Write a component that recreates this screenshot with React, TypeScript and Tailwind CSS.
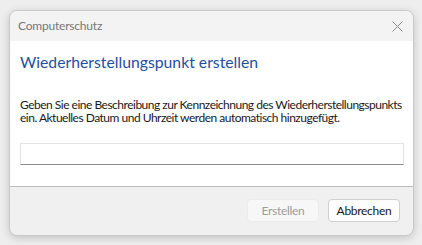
import React from "react";

export default function App() {
  return (
    <div
      className="w-[422px] h-[245px] bg-[#eeeeee] pt-[10px] pl-[9px]"
      style={{ fontFamily: 'Lato, "Noto Sans", sans-serif' }}
    >
      <div className="w-[405px] h-[226px] rounded-[8px] border border-[#c9c9c9] bg-[#f0f0f0] shadow-[0_2px_8px_rgba(0,0,0,0.18)] flex flex-col overflow-hidden">
        <div className="h-[30px] bg-[#f3f3f3] flex items-center justify-between pl-[8px] pr-[10px]">
          <span className="text-[12px] text-[#777777] tracking-[-0.2px]">Computerschutz</span>
          <svg width="11" height="11" viewBox="0 0 11 11">
            <path d="M0.5 0.5 L10.5 10.5 M10.5 0.5 L0.5 10.5" stroke="#8a8a8a" strokeWidth="1" />
          </svg>
        </div>
        <div className="bg-white flex-1 flex flex-col pl-[10px] pr-[10px] border-b border-[#bcbcbc]">
          <div className="mt-[11px] text-[15.75px] text-[#1f4fa0] leading-[20px] whitespace-nowrap">
            Wiederherstellungspunkt erstellen
          </div>
          <div className="mt-[26px] text-[12px] leading-[13px] tracking-[-0.5px] text-[#1a1a1a] whitespace-nowrap">
            <div>Geben Sie eine Beschreibung zur Kennzeichnung des Wiederherstellungspunkts</div>
            <div>ein. Aktuelles Datum und Uhrzeit werden automatisch hinzugefügt.</div>
          </div>
          <div className="mt-[19px] h-[22px] w-[384px] border border-[#e3e3e3] border-b-[#8a8a8a] bg-white" />
        </div>
        <div className="h-[48px] flex items-center justify-end gap-[9px] pr-[13px] pb-[1px]">
          <div className="w-[72px] h-[23px] rounded-[4px] bg-[#f7f7f7] border border-[#ececec] flex items-center justify-center text-[12px] tracking-[-0.3px] text-[#9c9c9c]">
            Erstellen
          </div>
          <div className="w-[72px] h-[23px] rounded-[4px] bg-[#fdfdfd] border border-[#d0d0d0] flex items-center justify-center text-[12px] tracking-[-0.3px] text-[#1a1a1a]">
            Abbrechen
          </div>
        </div>
      </div>
    </div>
  );
}
